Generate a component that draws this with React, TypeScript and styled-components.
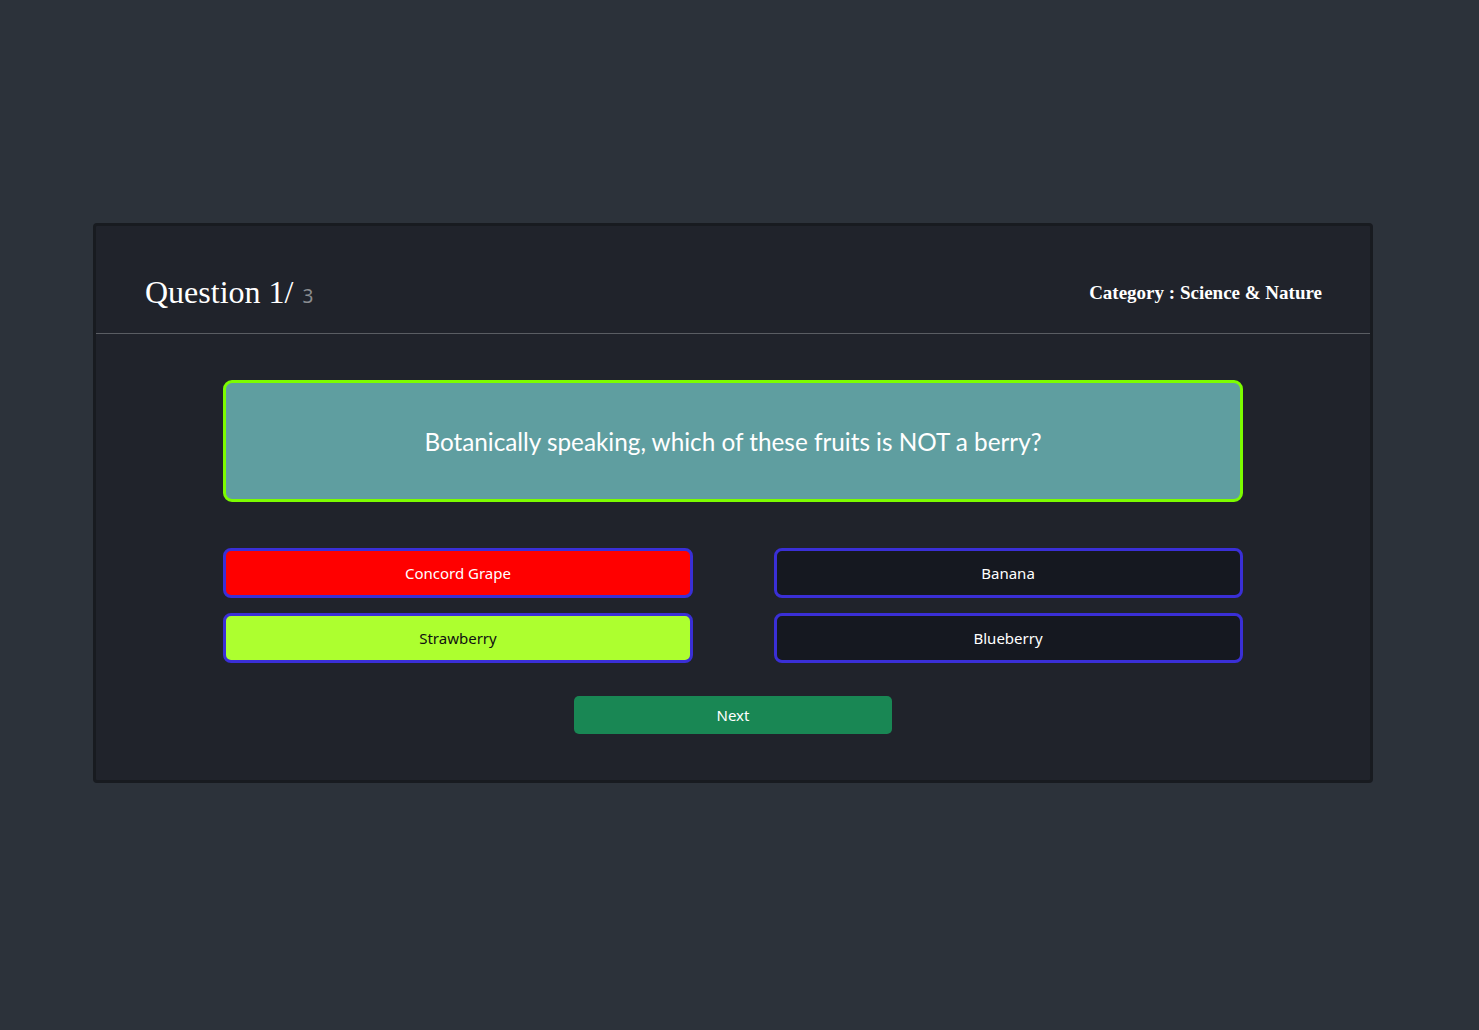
import React from "react";
import styled, { createGlobalStyle } from "styled-components";

const Global = createGlobalStyle`
  html, body { margin: 0; padding: 0; background: #2c323a; }
  body { min-height: 1030px; }
`;

const Page = styled.div`
  padding: 223px 106px 0 93px;
  box-sizing: border-box;
  min-height: 1030px;
`;

const Card = styled.div`
  background: #20232b;
  border: 3px solid #181b20;
  border-radius: 4px;
  height: 560px;
  box-sizing: border-box;
`;

const Header = styled.div`
  display: flex;
  justify-content: space-between;
  align-items: center;
  height: 108px;
  box-sizing: border-box;
  padding: 25px 48px 0 49px;
  border-bottom: 1px solid #5a5d63;
`;

const Title = styled.h2`
  margin: 0;
  font-family: "Liberation Serif", "DejaVu Serif", serif;
  font-weight: 400;
  font-size: 32px;
  color: #ffffff;
`;

const Total = styled.span`
  font-family: "Noto Sans", sans-serif;
  font-size: 19px;
  color: #8a8c90;
  margin-left: 9px;
`;

const Category = styled.div`
  font-family: "Liberation Serif", "DejaVu Serif", serif;
  font-weight: 700;
  font-size: 19px;
  color: #ffffff;
  margin-top: 2px;
`;

const Body = styled.div`
  width: 80%;
  margin: 46px auto 0;
  display: flex;
  flex-direction: column;
  align-items: center;
`;

const QuestionBox = styled.div`
  width: 100%;
  height: 122px;
  box-sizing: border-box;
  background: #5f9ea0;
  border: 3px solid #7cfc00;
  border-radius: 9px;
  display: flex;
  align-items: center;
  justify-content: center;
  font-family: "Lato", sans-serif;
  font-size: 24.3px;
  color: #ffffff;
`;

const Options = styled.div`
  width: 100%;
  margin-top: 46px;
  display: grid;
  grid-template-columns: 1fr 1fr;
  column-gap: 81px;
  row-gap: 15px;
`;

const Option = styled.button<{ $bg: string; $fg: string }>`
  height: 50px;
  box-sizing: border-box;
  background: ${(p) => p.$bg};
  color: ${(p) => p.$fg};
  border: 3px solid #3a2fd6;
  border-radius: 8px;
  font-family: "Noto Sans", "Open Sans", sans-serif;
  font-size: 15px;
  cursor: pointer;
  padding: 0 0 0 0;
  line-height: 1;
`;

const Next = styled.button`
  margin-top: 33px;
  width: 318px;
  height: 38px;
  background: #198754;
  color: #ffffff;
  border: none;
  border-radius: 5px;
  font-family: "Noto Sans", "Open Sans", sans-serif;
  font-size: 15px;
  cursor: pointer;
`;

const options = [
  { label: "Concord Grape", bg: "#ff0000", fg: "#ffffff" },
  { label: "Banana", bg: "#151820", fg: "#ffffff" },
  { label: "Strawberry", bg: "#adff2f", fg: "#111111" },
  { label: "Blueberry", bg: "#151820", fg: "#ffffff" },
];

export default function App() {
  return (
    <>
      <Global />
      <Page>
        <Card>
          <Header>
            <Title>
              Question 1/<Total>3</Total>
            </Title>
            <Category>Category : Science &amp; Nature</Category>
          </Header>
          <Body>
            <QuestionBox>Botanically speaking, which of these fruits is NOT a berry?</QuestionBox>
            <Options>
              {options.map((o) => (
                <Option key={o.label} $bg={o.bg} $fg={o.fg}>
                  {o.label}
                </Option>
              ))}
            </Options>
            <Next>Next</Next>
          </Body>
        </Card>
      </Page>
    </>
  );
}
